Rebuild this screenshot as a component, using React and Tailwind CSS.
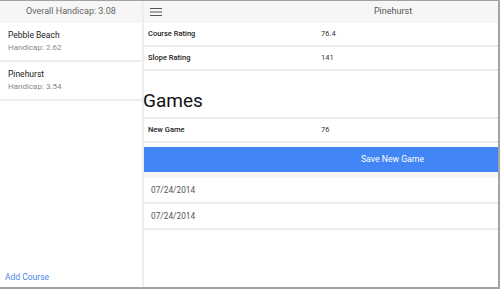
import React from 'react';

const courses = [
  { name: 'Pebble Beach', handicap: '2.62' },
  { name: 'Pinehurst', handicap: '3.54' },
];

const games = ['07/24/2014', '07/24/2014'];

function InfoRow({ label, value }) {
  return (
    <div className="flex h-[24px] items-center border-b-2 border-[#ededed]">
      <div className="w-[177px] pl-[4px] text-[7.5px] font-medium text-[#222]">{label}</div>
      <div className="text-[7.5px] text-[#333]">{value}</div>
    </div>
  );
}

export default function App() {
  return (
    <div
      className="box-border flex h-[289px] w-[500px] overflow-hidden border-t border-r-2 border-b-2 border-[#a3a3a3] bg-white"
      style={{ fontFamily: 'Roboto, "Liberation Sans", sans-serif' }}
    >
      {/* Sidebar */}
      <div className="flex w-[144px] shrink-0 flex-col border-r-2 border-[#eeeeee]">
        <div className="flex h-[22px] items-center justify-center bg-[#f6f6f6] text-[9px] text-[#666]">
          Overall Handicap: 3.08
        </div>
        {courses.map((c) => (
          <div key={c.name} className="flex h-[39px] flex-col justify-center border-b-2 border-[#ededed] pl-[8px]">
            <div className="text-[8.5px] leading-[13px] text-[#222]">{c.name}</div>
            <div className="text-[8px] leading-[12px] text-[#888]">Handicap: {c.handicap}</div>
          </div>
        ))}
        <div className="flex-1" />
        <div className="pb-[3px] pl-[5px] text-[8.5px] text-[#4a86e8]">Add Course</div>
      </div>

      {/* Detail */}
      <div className="flex min-w-0 flex-1 flex-col">
        <div className="flex h-[22px] items-center bg-[#f6f6f6]">
          <svg className="ml-[6px] h-[12px] w-[12px]" viewBox="0 0 12 12">
            <path d="M0 2.5h12M0 6h12M0 9.5h12" stroke="#555" strokeWidth="1.2" />
          </svg>
          <div className="flex flex-1 justify-center pl-[126px] text-[9px] text-[#555]">Pinehurst</div>
        </div>
        <InfoRow label="Course Rating" value="76.4" />
        <InfoRow label="Slope Rating" value="141" />
        <div className="flex h-[48px] items-end border-b-2 border-[#ededed] pb-[5px]">
          <div className="-ml-[1px] text-[19px] leading-[22px] text-[#111]">Games</div>
        </div>
        <InfoRow label="New Game" value="76" />
        <div className="mt-[4px] flex h-[25px] items-center justify-center bg-[#4285f4] pl-[143px] text-[8.7px] text-white">
          Save New Game
        </div>
        <div className="h-[6px] bg-[#f5f5f5]" />
        {games.map((d, i) => (
          <div key={i} className="flex h-[26px] items-center border-b-2 border-[#ededed] pl-[7px] text-[8.3px] text-[#555]">
            {d}
          </div>
        ))}
      </div>
    </div>
  );
}
